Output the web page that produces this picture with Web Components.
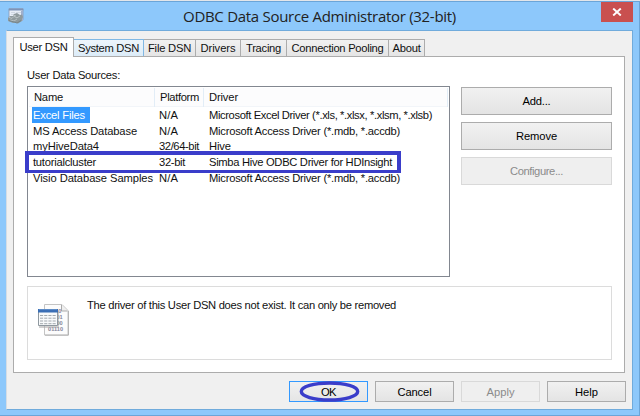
<!DOCTYPE html>
<html lang="en"><head><meta charset="utf-8"><title>ODBC Data Source Administrator</title>
<style>html,body{margin:0;width:640px;height:416px;overflow:hidden;background:#e5e8ec}</style></head>
<body><odbc-window></odbc-window>
<script>
const make=(name,html,setup)=>customElements.define(name,class extends HTMLElement{
 connectedCallback(){if(this.shadowRoot)return;const r=this.attachShadow({mode:'open'});r.innerHTML=html;if(setup)setup(this,r)}
});
// Label whose tracking is adjusted so that it spans the width given in "w".
make('ui-text','<style>:host{display:inline-block;white-space:pre;flex:none}span{display:inline-block}</style><span><slot></slot></span>',(h,r)=>{
 const w=+h.getAttribute('w'),s=r.querySelector('span'),n=h.textContent.length;
 s.style.letterSpacing='0';const cur=s.getBoundingClientRect().width;
 if(w&&cur)s.style.letterSpacing=(w-cur)/n+'px';
});
make('ui-button',`<style>:host{display:flex;box-sizing:border-box;align-items:center;justify-content:center;width:79px;height:21px;border:1px solid #acacac;background:linear-gradient(#f1f1f1,#e4e4e4);color:#000;position:relative}
:host([wide]){width:151px;height:28px}
:host([disabled]){border-color:#d9d9d9;background:#efefef;color:#8b8b8b}
:host([primary]){border-color:#3399ff;background:linear-gradient(#f1f1f1,#e5e5e5)}
svg{position:absolute;left:9px;top:-1px;overflow:visible;display:none}:host([primary]) svg{display:block}</style><slot></slot>
<svg width="60" height="21"><ellipse cx="30.5" cy="10.5" rx="28.2" ry="8.5" fill="none" stroke="#3a3dca" stroke-width="3.4"/></svg>`);
make('ui-tab',`<style>:host{display:flex;box-sizing:border-box;height:17px;align-items:center;justify-content:center;border:1px solid #acacac;border-bottom:0;border-left-width:0;background:linear-gradient(#f1f1f1,#e5e5e5)}
:host([hot]){background:linear-gradient(#edf5fb,#dcecf8);border-color:#80b8e4}
:host([active]){height:20px;background:#fff;border:1px solid #acacac;border-bottom:0;margin-bottom:-1px;padding-bottom:2px}</style><slot></slot>`);
make('ui-row',`<style>:host{display:grid;grid-template-columns:126px 50px 1fr;height:15.75px;align-items:center;padding-left:5px}</style><slot></slot>`);
make('ui-header',`<style>:host{display:grid;grid-template-columns:126px 49px 1fr;height:18px;background:#fcfcfd;border-bottom:1px solid #f2f5f9;align-items:stretch}
::slotted(*){padding-left:5px;line-height:19px;border-right:1px solid #e2edf7}</style><slot></slot>`);
make('file-icon',`<style>:host{display:block;width:32px;height:34px}svg{display:block}text{font:bold 5.6px "Liberation Sans",sans-serif;fill:#85869a}</style>
<svg width="32" height="34" viewBox="0 0 32 34"><path d="M6.5.5H24l6 6v24.5H6.5z" fill="#fcfcfc" stroke="#c4c4c4"/><path d="M7 31.2h23.5V7" fill="none" stroke="#aaa" stroke-width=".8"/><path d="M23.5 1v6h6" fill="#eee" stroke="#aaa"/><text x="11" y="8.7">1010</text><text x="18.5" y="15">01</text><text x="18.5" y="21">00</text><text x="10" y="27" textLength="15">01110</text>
<path d="M1 7h20v17H1z" fill="#aaa" opacity=".55"/><path d="M.5 5.5h19v16H.5z" fill="#f8fafb" stroke="#8f989f"/><path d="M0 5h20v3.5H0z" fill="#396eb5"/><path d="M1 5.6h18" stroke="#7ba4d5" stroke-width=".6"/><path d="M2 11.5h16M2 14.2h16M2 17h16M2 19.7h16" stroke="#989fa5" stroke-width=".9" stroke-dasharray="3.1 1.1"/></svg>`);
make('app-icon',`<style>:host{display:block;width:17px;height:17px}svg{display:block}</style>
<svg width="17" height="17" viewBox="0 0 17 17"><path d="M1 .8h14v11H1z" fill="#e7edf6" stroke="#8b9bb6" stroke-width=".8"/><path d="M.8.5h14.5v2H.8z" fill="#7e94b8"/><path d="M3 4.5h4M8 4.5h5M3 6.5h3" stroke="#cfd7e2"/><path d="M13 3h2v10h-2z" fill="#9fafcc"/><path d="m0 10 2-2h3l1-2 3-1 3 2 2-.5 1 2.5-1 2v2l-4 2.5-3-1-2 .5-5-2z" fill="#8f9a9d"/><path d="m1 9.4 3 1 2-2 3 1.5 3-2M5 7l3 1M2 12l4 1 3-2" stroke="#bcc5c7" stroke-width=".9" fill="none"/><path d="m1 12.5 5 1.5 3 1 4-2.5" stroke="#77858a" fill="none"/></svg>`);
make('odbc-window',`<style>
:host{display:flex;flex-direction:column;box-sizing:border-box;width:640px;height:416px;border-top:1px solid #e3e6ea;font:11.2px/14px "Liberation Sans",Arial,sans-serif;color:#111}
.frame{box-sizing:border-box;flex:1;border:1px solid #6ba5d8;border-left:0;background:#8dc8fb;padding:0 6px 5px;display:flex;flex-direction:column}
header{height:28px;display:flex;align-items:flex-start;box-sizing:border-box;flex:none}
header app-icon{margin:6px 0 0 2px}
header .title{margin-left:158px;font:15px/28px "Open Sans","Noto Sans",sans-serif;color:#222}
.close{margin:0 0 0 auto;width:32px;height:20px;background:#c9504f;display:flex;align-items:center;justify-content:center}
.client{box-sizing:border-box;flex:1;background:#f0f0f0;border:1px solid #70abdc;border-left-color:#d5dde5;padding:6px 6px 6px 6px;display:flex;flex-direction:column}
.tabs{display:flex;height:19px;align-items:flex-end;flex:none;position:relative}
.panel{box-sizing:border-box;width:612px;height:317px;border:1px solid #acacac;background:#fff;padding:11px 13px 13px;flex:none}
.label{height:18px;line-height:14px}
.main{display:flex;gap:11px;height:191px}
.list{box-sizing:border-box;width:423px;flex:none;height:191px;border:1px solid #828790;background:#fff;position:relative;padding:1px}
.list ui-row{padding-left:4px}
.sel{background:#3399ff;color:#fff;margin-left:-1px;padding:0 4px 0 1px;line-height:16px;width:53px;display:block}
.mark{position:absolute;left:-3px;top:64px;width:376px;height:22px;box-sizing:border-box;border:4px solid #3a3dca;border-bottom-width:3px}
.side{display:flex;flex-direction:column;gap:7px;padding-top:1px;flex:none}
.info{box-sizing:border-box;width:585px;height:74px;border:1px solid #dcdcdc;margin-top:9px;display:flex;padding:17px 10px}
.info ui-text{margin:-6px 0 0 17px}
footer{display:flex;justify-content:flex-end;gap:7px;padding-top:8px}
</style>
<div class="frame"><header><app-icon></app-icon><ui-text class="title" w="273">ODBC Data Source Administrator (32-bit)</ui-text>
<div class="close"><svg width="10" height="8" viewBox="0 0 10 8"><path d="m1.2.5 7.6 7M8.8.5l-7.6 7" stroke="#fff" stroke-width="1.9"/></svg></div></header>
<div class="client"><div class="tabs">
<ui-tab active style="width:61px"><ui-text w="48">User DSN</ui-text></ui-tab><ui-tab hot style="width:70px"><ui-text w="61">System DSN</ui-text></ui-tab><ui-tab style="width:52px"><ui-text w="43">File DSN</ui-text></ui-tab><ui-tab style="width:45px"><ui-text w="35">Drivers</ui-text></ui-tab><ui-tab style="width:46px"><ui-text w="35">Tracing</ui-text></ui-tab><ui-tab style="width:102px"><ui-text w="92">Connection Pooling</ui-text></ui-tab><ui-tab style="width:36px"><ui-text w="28">About</ui-text></ui-tab></div>
<div class="panel"><div class="label"><ui-text w="93">User Data Sources:</ui-text></div>
<div class="main"><div class="list"><ui-header><div><ui-text w="29">Name</ui-text></div><div><ui-text w="39">Platform</ui-text></div><div><ui-text w="29">Driver</ui-text></div></ui-header>
<ui-row><span class="sel"><ui-text w="52">Excel Files</ui-text></span><ui-text w="19">N/A</ui-text><ui-text w="223">Microsoft Excel Driver (*.xls, *.xlsx, *.xlsm, *.xlsb)</ui-text></ui-row>
<ui-row><ui-text w="104">MS Access Database</ui-text><ui-text w="19">N/A</ui-text><ui-text w="191">Microsoft Access Driver (*.mdb, *.accdb)</ui-text></ui-row>
<ui-row><ui-text w="66">myHiveData4</ui-text><ui-text w="40">32/64-bit</ui-text><ui-text w="22">Hive</ui-text></ui-row>
<ui-row><ui-text w="63">tutorialcluster</ui-text><ui-text w="26">32-bit</ui-text><ui-text w="183">Simba Hive ODBC Driver for HDInsight</ui-text></ui-row>
<ui-row><ui-text w="120">Visio Database Samples</ui-text><ui-text w="19">N/A</ui-text><ui-text w="191">Microsoft Access Driver (*.mdb, *.accdb)</ui-text></ui-row>
<div class="mark"></div></div>
<div class="side"><ui-button wide><ui-text w="28">Add...</ui-text></ui-button><ui-button wide><ui-text w="41">Remove</ui-text></ui-button><ui-button wide disabled><ui-text w="53">Configure...</ui-text></ui-button></div></div>
<div class="info"><file-icon></file-icon><ui-text w="309">The driver of this User DSN does not exist. It can only be removed</ui-text></div></div>
<footer><ui-button primary><ui-text w="15">OK</ui-text></ui-button><ui-button><ui-text w="34">Cancel</ui-text></ui-button><ui-button disabled><ui-text w="28">Apply</ui-text></ui-button><ui-button><ui-text w="23">Help</ui-text></ui-button></footer>
</div></div>`);
</script></body></html>
